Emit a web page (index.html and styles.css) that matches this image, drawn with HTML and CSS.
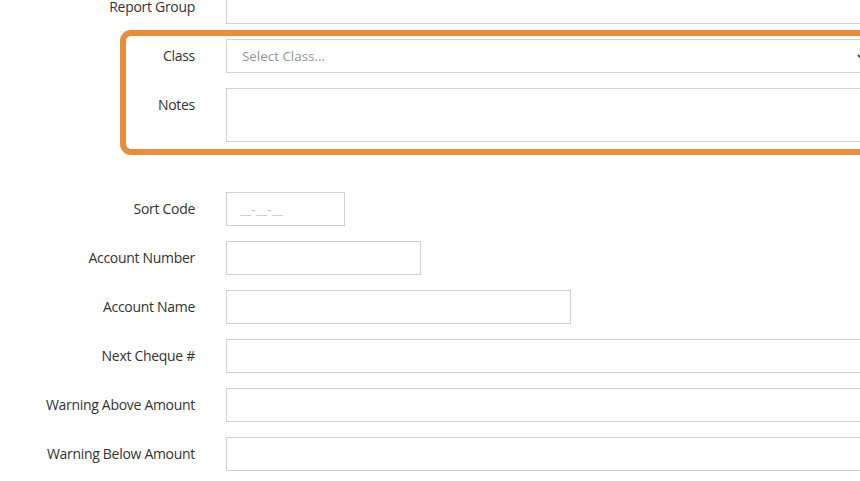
FILE: index.html
```html
<!DOCTYPE html>
<html>
<head>
<meta charset="utf-8">
<link rel="stylesheet" href="styles.css">
</head>
<body>
<div class="page">
  <form class="form">
    <div class="row">
      <label class="label">Report Group</label>
      <div class="field full"></div>
    </div>
    <div class="group">
      <div class="highlight"></div>
      <div class="row">
        <label class="label">Class</label>
        <div class="field full select">
          <span class="placeholder">Select Class...</span>
          <svg class="caret" width="10" height="8" viewBox="0 0 10 8"><path d="M1 2 L5 6 L9 2" fill="none" stroke="#444" stroke-width="1.8"/></svg>
        </div>
      </div>
      <div class="row">
        <label class="label">Notes</label>
        <div class="field full textarea"></div>
      </div>
    </div>
    <div class="row section">
      <label class="label">Sort Code</label>
      <div class="field sort"><span class="mask">__-__-__</span></div>
    </div>
    <div class="row">
      <label class="label">Account Number</label>
      <div class="field acc-num"></div>
    </div>
    <div class="row">
      <label class="label">Account Name</label>
      <div class="field acc-name"></div>
    </div>
    <div class="row">
      <label class="label">Next Cheque #</label>
      <div class="field full"></div>
    </div>
    <div class="row">
      <label class="label">Warning Above Amount</label>
      <div class="field full"></div>
    </div>
    <div class="row">
      <label class="label">Warning Below Amount</label>
      <div class="field full"></div>
    </div>
  </form>
</div>
</body>
</html>
```

FILE: styles.css
```css
html, body {
  margin: 0;
  padding: 0;
  background: #ffffff;
  overflow: hidden;
}
.page {
  width: 860px;
  height: 481px;
  overflow: hidden;
  font-family: "Open Sans", "Liberation Sans", sans-serif;
  font-size: 14px;
  color: #333333;
}
.form {
  margin-top: -10px;
  display: flex;
  flex-direction: column;
  gap: 15px;
  width: 900px;
}
.group {
  position: relative;
  display: flex;
  flex-direction: column;
  gap: 15px;
}
.highlight {
  position: absolute;
  left: 120px;
  top: -9px;
  width: 780px;
  height: 113px;
  border: 6px solid #e88d3b;
  border-radius: 11px;
  pointer-events: none;
}
.row {
  display: flex;
  align-items: flex-start;
}
.row.section {
  margin-top: 35px;
}
.label {
  width: 195px;
  flex: none;
  text-align: right;
  padding-top: 7px;
  line-height: 20px;
  letter-spacing: -0.3px;
}
.field {
  margin-left: 31px;
  height: 32px;
  border: 1px solid #d2d2d2;
  background: #fff;
  box-sizing: content-box;
  position: relative;
  display: flex;
  align-items: center;
}
.full { width: 644px; }
.textarea { height: 52px; }
.sort { width: 117px; }
.acc-num { width: 193px; }
.acc-name { width: 343px; }
.placeholder {
  padding-left: 15px;
  font-size: 13.4px;
  color: #949494;
}
.caret {
  position: absolute;
  left: 630px;
  top: 13px;
}
.mask {
  padding-left: 13px;
  font-size: 12px;
  color: #c4c4c4;
  letter-spacing: 0.5px;
}
```
